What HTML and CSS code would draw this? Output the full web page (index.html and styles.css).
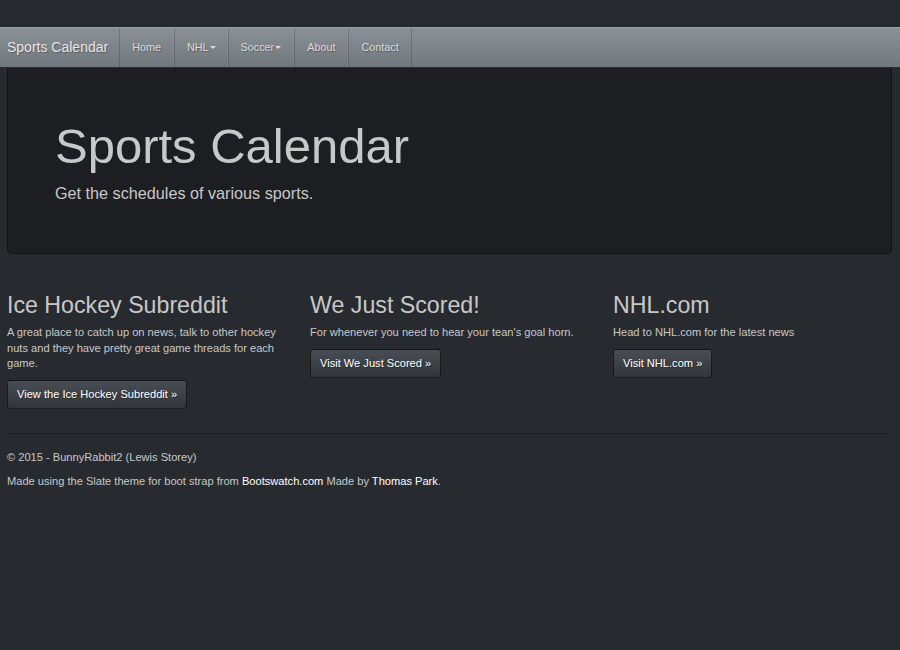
FILE: index.html
```html
<!DOCTYPE html>
<html>
<head>
<meta charset="utf-8">
<title>Sports Calendar</title>
<link rel="stylesheet" href="styles.css">
</head>
<body>
<nav class="navbar">
  <a class="brand" href="#">Sports Calendar</a>
  <ul class="nav">
    <li><a href="#">Home</a></li>
    <li><a class="tight" href="#">NHL<span class="caret"></span></a></li>
    <li><a href="#">Soccer<span class="caret"></span></a></li>
    <li><a href="#">About</a></li>
    <li><a href="#">Contact</a></li>
  </ul>
</nav>
<div class="container">
  <div class="jumbotron">
    <h1>Sports Calendar</h1>
    <p class="lead">Get the schedules of various sports.</p>
  </div>
  <div class="row">
    <div class="col">
      <h2>Ice Hockey Subreddit</h2>
      <p>A great place to catch up on news, talk to other hockey nuts and they have pretty great game threads for each game.</p>
      <a class="btn" href="#">View the Ice Hockey Subreddit &raquo;</a>
    </div>
    <div class="col">
      <h2>We Just Scored!</h2>
      <p>For whenever you need to hear your tean's goal horn.</p>
      <a class="btn" href="#">Visit We Just Scored &raquo;</a>
    </div>
    <div class="col">
      <h2>NHL.com</h2>
      <p>Head to NHL.com for the latest news</p>
      <a class="btn" href="#">Visit NHL.com &raquo;</a>
    </div>
  </div>
  <hr class="rule">
  <footer class="footer">
    <p>&copy; 2015 - BunnyRabbit2 (Lewis Storey)</p>
    <p>Made using the Slate theme for boot strap from <a href="#">Bootswatch.com</a> Made by <a href="#">Thomas Park</a>.</p>
  </footer>
</div>
</body>
</html>
```
FILE: styles.css
```css
html, body {
  margin: 0;
  padding: 0;
}
body {
  background: #272b30;
  color: #c8c8c8;
  font-family: "Liberation Sans", Arial, sans-serif;
  font-size: 11.1px;
  line-height: 15.5px;
  padding-top: 27px;
  overflow: hidden;
}
a { text-decoration: none; }

.navbar {
  display: flex;
  align-items: stretch;
  height: 39px;
  background-image: linear-gradient(#8a9196, #7a8288 60%, #70787d);
  border-top: 1px solid #9aa0a5;
  border-bottom: 1px solid #2a2e33;
  text-shadow: 1px 1px 1px rgba(0,0,0,0.3);
}
.brand {
  display: flex;
  align-items: center;
  padding: 0 11px 0 7px;
  font-size: 14px;
  color: #e6e6e6;
}
.nav {
  display: flex;
  list-style: none;
  margin: 0;
  padding: 0;
}
.nav li { display: flex; }
.nav a {
  display: flex;
  align-items: center;
  padding: 0 12px;
  color: #dcdcdc;
  font-size: 10.8px;
  border-left: 1px solid rgba(0,0,0,0.18);
  border-right: 1px solid rgba(255,255,255,0.08);
}
.nav a.tight { padding-right: 11px; }
.nav li:last-child a { border-right: 1px solid rgba(0,0,0,0.18); }
.caret {
  display: inline-block;
  width: 0;
  height: 0;
  margin-left: 1px;
  border-top: 3px solid #dcdcdc;
  border-left: 3px solid transparent;
  border-right: 3px solid transparent;
}

.container {
  padding: 0 8px 0 7px;
}
.jumbotron {
  background: #1c1e22;
  border: 1px solid rgba(0,0,0,0.35);
  border-top: none;
  border-radius: 0 0 5px 5px;
  padding: 49px 47px 48px;
  margin-bottom: 24px;
}
.jumbotron h1 {
  margin: 0 0 6px;
  font-size: 49px;
  font-weight: 400;
  line-height: 58px;
  color: #c8c8c8;
}
.jumbotron .lead {
  margin: 0;
  font-size: 16.2px;
  line-height: 24px;
  color: #c8c8c8;
}

.row {
  display: grid;
  grid-template-columns: 303px 303px 1fr;
}
.col { padding-right: 12px; }
.col h2 {
  margin: 14px 0 6px;
  font-size: 23.2px;
  line-height: 27px;
  font-weight: 400;
  color: #c8c8c8;
}
.col p { margin: 0 0 8px; }
.btn {
  display: inline-block;
  padding: 6px 9px;
  line-height: 15px;
  font-size: 11.1px;
  color: #fff;
  background-image: linear-gradient(#484e55, #3a3f44 60%, #313539);
  border: 1px solid rgba(0,0,0,0.6);
  border-radius: 3px;
  text-shadow: 1px 1px 1px rgba(0,0,0,0.3);
}
.rule {
  margin: 24px 0 16px;
  border: 0;
  border-top: 1px solid #1c1e22;
}
.footer p { margin: 0 0 8.5px; }
.footer a { color: #fff; }
```
